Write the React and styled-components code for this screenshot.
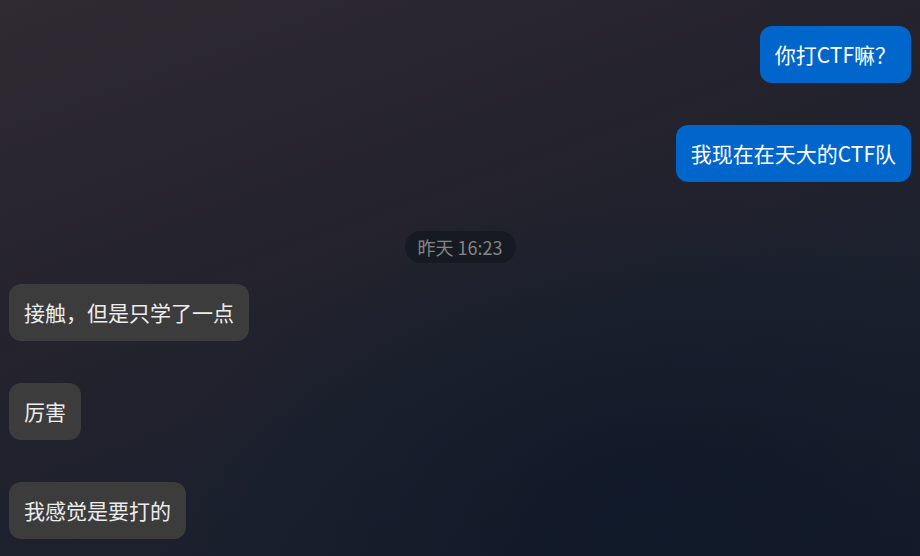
import React from 'react';
import styled, { createGlobalStyle, css } from 'styled-components';

const GlobalStyle = createGlobalStyle`
  html, body {
    margin: 0;
    padding: 0;
    height: 100%;
  }
  body {
    font-family: "Noto Sans CJK SC", "Noto Sans", sans-serif;
    background: #1c2030;
  }
`;

const ChatWindow = styled.div`
  width: 920px;
  height: 556px;
  box-sizing: border-box;
  overflow: hidden;
  padding: 26px 9px 0;
  display: flex;
  flex-direction: column;
  background:
    radial-gradient(ellipse 55% 60% at 72% 95%, rgba(14, 24, 40, 0.85), rgba(14, 24, 40, 0) 100%),
    linear-gradient(160deg, #302a32 0%, #25232d 35%, #1d212e 65%, #161c2a 100%);
`;

const MessageRow = styled.div`
  display: flex;
  justify-content: ${props => (props.mine ? 'flex-end' : 'flex-start')};
  margin-bottom: 42px;
`;

const Bubble = styled.div`
  box-sizing: border-box;
  height: 57px;
  padding: 0 15px;
  display: flex;
  align-items: center;
  border-radius: 12px;
  font-size: 21px;
  line-height: 1;
  white-space: nowrap;
  background: #3c3c3c;
  color: #ececec;

  ${props => props.mine && css`
    background: #0066cc;
    color: #ffffff;
  `}
`;

const TimeRow = styled.div`
  display: flex;
  justify-content: center;
  margin: 7px 0 21px;
`;

const TimePill = styled.div`
  height: 32px;
  padding: 0 13px;
  display: flex;
  align-items: center;
  border-radius: 16px;
  background: #161a23;
  color: #858585;
  font-size: 18px;
`;

const messages = [
  { id: 1, mine: true, text: '你打CTF嘛？' },
  { id: 2, mine: true, text: '我现在在天大的CTF队' },
  { id: 3, time: '昨天 16:23' },
  { id: 4, mine: false, text: '接触，但是只学了一点' },
  { id: 5, mine: false, text: '厉害' },
  { id: 6, mine: false, text: '我感觉是要打的' },
];

const App = () => (
  <>
    <GlobalStyle />
    <ChatWindow>
      {messages.map(msg => (msg.time ? (
        <TimeRow key={msg.id}>
          <TimePill>{msg.time}</TimePill>
        </TimeRow>
      ) : (
        <MessageRow key={msg.id} mine={msg.mine}>
          <Bubble mine={msg.mine}>{msg.text}</Bubble>
        </MessageRow>
      )))}
    </ChatWindow>
  </>
);

export default App;
